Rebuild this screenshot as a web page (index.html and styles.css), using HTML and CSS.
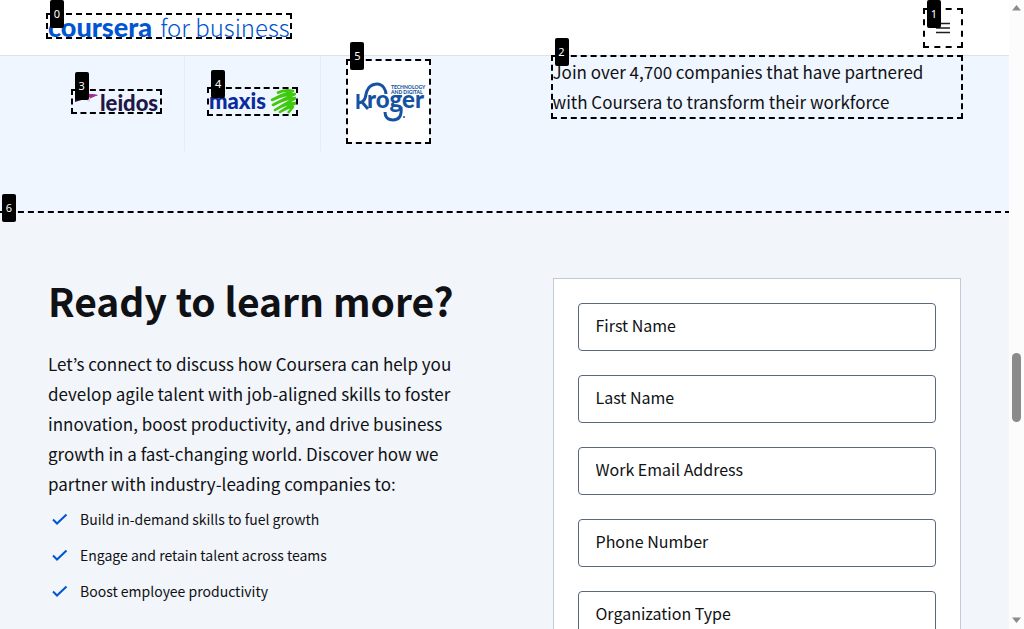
FILE: index.html
```html
<!DOCTYPE html>
<html lang="en">
<head>
<meta charset="utf-8">
<meta name="viewport" content="width=device-width, initial-scale=1">
<title>Coursera for Business</title>
<link rel="stylesheet" href="styles.css">
</head>
<body>
<div class="page">
  <header class="header">
    <a class="brand mark" href="#"><span class="badge">0</span><span class="brand-name">coursera</span><span class="brand-sub">for business</span></a>
    <button class="menu mark" type="button" aria-label="Menu"><span class="badge">1</span>
      <svg width="16" height="12" viewBox="0 0 16 12" stroke="#1f1f1f" stroke-width="1.3"><path d="M1 1.5h14M1 6h14M1 10.5h14"/></svg>
    </button>
  </header>
  <main>
    <section class="partners columns">
      <div class="logos">
        <div class="logo-cell"><div class="logo mark"><span class="badge">3</span>
          <svg width="87" height="21" viewBox="0 0 87 21" role="img" aria-label="Leidos">
            <path d="M2 1L25 4L2 11Z" fill="#211747"/><path d="M8 2L25 4L16 8Z" fill="#a32c9c"/><path d="M11 8L17 6L17 11Z" fill="#d8cfce"/>
            <text x="27" y="20" class="leidos-text">leidos</text>
          </svg></div></div>
        <div class="logo-cell"><div class="logo mark"><span class="badge">4</span>
          <svg width="87" height="25" viewBox="0 0 87 25" role="img" aria-label="Maxis">
            <text x="0" y="20" class="maxis-text">maxis</text>
            <path d="M68 4Q76 0 84 2Q74 5 63 11Q76 5 86 5Q75 10 64 16Q77 9 87 9Q76 15 66 21Q77 14 87 14Q78 18 71 23Q79 18 84 18L79 24" fill="none" stroke="#3fc90d" stroke-width="2.6" stroke-linejoin="round"/>
          </svg></div></div>
        <div class="logo-cell"><div class="logo logo-white mark"><span class="badge">5</span>
          <svg width="81" height="81" viewBox="0 0 81 81" role="img" aria-label="Kroger Technology and Digital">
            <g fill="none" stroke="#1552a0" stroke-width="3"><path d="M10 33V48M11 42C19 40 17 34 19 30C22 22 32 21 36 27Q38 30 38 33M14 41L20 48"/><path d="M53 46C54 55 51 59 45 59C39 59 37 55 37 51"/></g>
            <circle cx="56" cy="56" r="1" fill="#1552a0"/>
            <text x="19" y="47" class="kroger-text">roger</text>
            <text x="43" y="28" class="kroger-small">TECHNOLOGY</text>
            <text x="43" y="33" class="kroger-small">AND DIGITAL</text>
          </svg></div></div>
      </div>
      <p class="lead mark"><span class="badge">2</span>Join over 4,700 companies that have partnered with Coursera to transform their workforce</p>
    </section>
    <section class="contact columns mark">
      <span class="badge">6</span>
      <div class="pitch">
        <h1>Ready to learn more?</h1>
        <p class="lead">Let’s connect to discuss how Coursera can help you develop agile talent with job-aligned skills to foster innovation, boost productivity, and drive business growth in a fast-changing world. Discover how we partner with industry-leading companies to:</p>
        <ul class="benefits">
          <li><svg width="24" height="24" viewBox="0 0 24 24"><path d="M5 12.5L9 16.5L18.5 7.5"/></svg>Build in-demand skills to fuel growth</li>
          <li><svg width="24" height="24" viewBox="0 0 24 24"><path d="M5 12.5L9 16.5L18.5 7.5"/></svg>Engage and retain talent across teams</li>
          <li><svg width="24" height="24" viewBox="0 0 24 24"><path d="M5 12.5L9 16.5L18.5 7.5"/></svg>Boost employee productivity</li>
        </ul>
      </div>
      <form class="card">
        <input type="text" aria-label="First Name" placeholder="First Name">
        <input type="text" aria-label="Last Name" placeholder="Last Name">
        <input type="email" aria-label="Work Email Address" placeholder="Work Email Address">
        <input type="tel" aria-label="Phone Number" placeholder="Phone Number">
        <select aria-label="Organization Type"><option>Organization Type</option></select>
      </form>
    </section>
  </main>
</div>
<div class="scrollbar" aria-hidden="true">
  <svg width="9" height="6" viewBox="0 0 9 6"><path d="M0 5.5L4.5 0L9 5.5Z"/></svg>
  <div class="track"><div class="before"></div><div class="thumb"></div><div class="after"></div></div>
  <svg width="9" height="6" viewBox="0 0 9 6"><path d="M0 .5L4.5 6L9 .5Z"/></svg>
</div>
</body>
</html>
```
FILE: styles.css
```css
* { box-sizing: border-box; }

body {
  margin: 0;
  height: 100vh;
  overflow: hidden;
  display: flex;
  background: #fff;
  color: #0f1114;
  font-family: "Noto Sans CJK KR", "Noto Sans", sans-serif;
}

.page { flex: 1; min-width: 0; overflow: hidden; }

.header {
  display: flex;
  align-items: center;
  justify-content: space-between;
  height: 56px;
  padding: 0 48px;
  border-bottom: 1px solid #dfe3e8;
}

/* Numbered dashed outline around an interactive region */
.mark { position: relative; }
.mark::after {
  content: "";
  position: absolute;
  inset: -2px;
  border: 2px dashed #000;
  pointer-events: none;
}
.badge {
  position: absolute;
  z-index: 5;
  left: 2px;
  top: -19px;
  width: 14px;
  height: 28px;
  border-radius: 2px;
  background: #000;
  color: #fff;
  font: 400 11px/28px "Noto Sans", sans-serif;
  text-align: center;
}
.brand .badge { top: -15px; }
.menu .badge { top: -10px; }

.brand {
  display: flex;
  align-items: baseline;
  gap: 8px;
  height: 22px;
  margin-top: -3px;
  color: #0056d2;
  text-decoration: none;
  line-height: 24px;
}
.brand-name { font: 900 27px/24px Lato, sans-serif; }
.brand-sub { font-size: 24px; font-weight: 300; white-space: nowrap; }

.menu {
  display: grid;
  place-items: center;
  width: 36px;
  height: 36px;
  padding: 0;
  border: 0;
  background: transparent;
}

.columns {
  display: grid;
  grid-template-columns: minmax(0, 1fr) minmax(0, 1fr);
  column-gap: 96px;
  padding: 0 48px;
  align-items: start;
}

.partners { background: #eff6ff; padding-bottom: 62px; }
.partners .lead { margin-top: 1px; }

.logos { display: grid; grid-template-columns: repeat(3, 1fr); }
.logo-cell {
  display: grid;
  place-items: center;
  height: 95px;
  padding-bottom: 4px;
}
.logo-cell + .logo-cell { border-left: 1px solid #e3edfa; }
.logo svg { display: block; }
.logo-white { background: #fff; }
.leidos-text { font: 900 22px Lato, sans-serif; fill: #211747; }
.maxis-text { font: 900 22px Lato, sans-serif; fill: #0a2b9c; }
.kroger-text { font: 900 24px Lato, sans-serif; fill: #1552a0; }
.kroger-small { font: 900 5px Lato, sans-serif; fill: #1552a0; }

.lead { margin: 0; font-size: 17px; line-height: 30px; }

.contact { background: #f2f5fa; padding-top: 65px; }

h1 { margin: -2px 0 25px; font-size: 39px; line-height: 48px; font-weight: 700; white-space: nowrap; }

.benefits {
  display: grid;
  gap: 12px;
  margin: 8px 0 0;
  padding: 0;
  list-style: none;
  font-size: 14px;
  line-height: 24px;
}
.benefits li { display: flex; gap: 8px; }
.benefits path { fill: none; stroke: #0056d2; stroke-width: 2; }

.card {
  display: grid;
  gap: 24px;
  padding: 24px;
  border: 1px solid #c1cad9;
  background: #fff;
}
.card input, .card select {
  width: 100%;
  height: 48px;
  padding: 0 17px 4px;
  border: 1px solid #5b6780;
  border-radius: 4px;
  background: #fff;
  color: #0f1114;
  font: inherit;
  font-size: 16px;
  appearance: none;
}
.card input::placeholder { color: #0f1114; opacity: 1; }

.scrollbar {
  display: flex;
  flex-direction: column;
  align-items: center;
  width: 15px;
  padding: 5px 0 6px;
  background: #fcfcfc;
}
.scrollbar path { fill: #8b8b8b; }
.track { flex: 1; display: flex; flex-direction: column; }
.before { flex: 342; }
.thumb { flex: 69; width: 9px; border-radius: 5px; background: #8b8b8b; }
.after { flex: 195; }
```
